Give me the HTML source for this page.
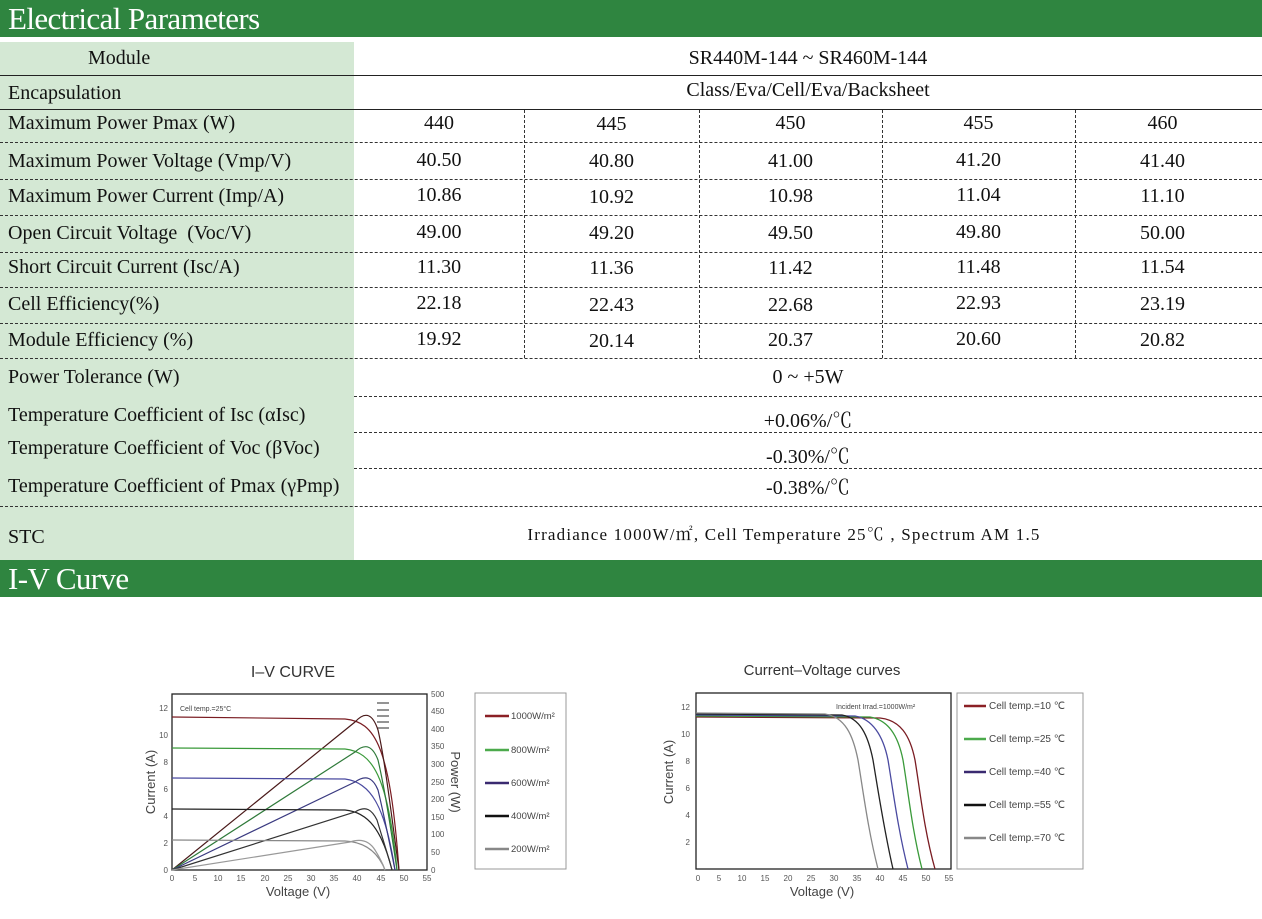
<!DOCTYPE html>
<html><head><meta charset="utf-8"><style>
body{margin:0;width:1262px;height:919px;background:#fff;position:relative;overflow:hidden;font-family:"Liberation Serif","Noto Serif CJK SC",serif;color:#111}
.bar{position:absolute;left:0;width:1262px;background:#2f8540;color:#fff;font-size:31px;line-height:37px;padding-left:8px;box-sizing:border-box;letter-spacing:-0.6px}
.lc{position:absolute;left:0;width:354px;background:#d4e8d4}
.t{position:absolute;font-size:20px;white-space:nowrap;margin-top:-1px}
.hl{position:absolute;height:0;border-top:1px dashed #333}
.hs{position:absolute;height:0;border-top:1px solid #222}
.vl{position:absolute;width:0;border-left:1px dashed #333}
.c{text-align:center}
svg text{font-family:"Liberation Sans",sans-serif}
</style></head><body>
<div class="bar" style="top:0">Electrical Parameters</div>
<div class="lc" style="top:42px;height:518px"></div>
<div class="bar" style="top:560px">I-V Curve</div>

<div class="hs" style="left:0;width:1262px;top:75px"></div>
<div class="hs" style="left:0;width:1262px;top:109px"></div>
<div class="hl" style="left:0;width:1262px;top:142px"></div>
<div class="hl" style="left:0;width:1262px;top:179px"></div>
<div class="hl" style="left:0;width:1262px;top:215px"></div>
<div class="hl" style="left:0;width:1262px;top:252px"></div>
<div class="hl" style="left:0;width:1262px;top:287px"></div>
<div class="hl" style="left:0;width:1262px;top:323px"></div>
<div class="hl" style="left:0;width:1262px;top:358px"></div>
<div class="hl" style="left:354px;width:908px;top:396px"></div>
<div class="hl" style="left:354px;width:908px;top:432px"></div>
<div class="hl" style="left:354px;width:908px;top:468px"></div>
<div class="hl" style="left:0;width:1262px;top:506px"></div>
<div class="vl" style="left:524px;top:110px;height:248px"></div>
<div class="vl" style="left:699px;top:110px;height:248px"></div>
<div class="vl" style="left:882px;top:110px;height:248px"></div>
<div class="vl" style="left:1075px;top:110px;height:248px"></div>

<div class="t" style="left:88px;top:48px">Module</div>
<div class="t c" style="left:354px;width:908px;top:48px">SR440M-144 ~ SR460M-144</div>
<div class="t" style="left:8px;top:83px">Encapsulation</div>
<div class="t c" style="left:354px;width:908px;top:80px">Class/Eva/Cell/Eva/Backsheet</div>

<div class="t" style="left:8px;top:113px">Maximum Power Pmax (W)</div>
<div class="t" style="left:8px;top:151px">Maximum Power Voltage (Vmp/V)</div>
<div class="t" style="left:8px;top:186px">Maximum Power Current (Imp/A)</div>
<div class="t" style="left:8px;top:223px">Open Circuit Voltage &nbsp;(Voc/V)</div>
<div class="t" style="left:8px;top:257px">Short Circuit Current (Isc/A)</div>
<div class="t" style="left:8px;top:294px">Cell Efficiency(%)</div>
<div class="t" style="left:8px;top:330px">Module Efficiency (%)</div>
<div class="t" style="left:8px;top:367px">Power Tolerance (W)</div>
<div class="t" style="left:8px;top:405px">Temperature Coefficient of Isc (αIsc)</div>
<div class="t" style="left:8px;top:438px">Temperature Coefficient of Voc (βVoc)</div>
<div class="t" style="left:8px;top:476px">Temperature Coefficient of Pmax (γPmp)</div>
<div class="t" style="left:8px;top:527px">STC</div>

<div class="t c" style="left:354px;width:170px;top:113px">440</div>
<div class="t c" style="left:524px;width:175px;top:114px">445</div>
<div class="t c" style="left:699px;width:183px;top:113px">450</div>
<div class="t c" style="left:882px;width:193px;top:113px">455</div>
<div class="t c" style="left:1075px;width:175px;top:113px">460</div>

<div class="t c" style="left:354px;width:170px;top:150px">40.50</div>
<div class="t c" style="left:524px;width:175px;top:151px">40.80</div>
<div class="t c" style="left:699px;width:183px;top:151px">41.00</div>
<div class="t c" style="left:882px;width:193px;top:150px">41.20</div>
<div class="t c" style="left:1075px;width:175px;top:151px">41.40</div>

<div class="t c" style="left:354px;width:170px;top:185px">10.86</div>
<div class="t c" style="left:524px;width:175px;top:187px">10.92</div>
<div class="t c" style="left:699px;width:183px;top:186px">10.98</div>
<div class="t c" style="left:882px;width:193px;top:185px">11.04</div>
<div class="t c" style="left:1075px;width:175px;top:186px">11.10</div>

<div class="t c" style="left:354px;width:170px;top:222px">49.00</div>
<div class="t c" style="left:524px;width:175px;top:223px">49.20</div>
<div class="t c" style="left:699px;width:183px;top:223px">49.50</div>
<div class="t c" style="left:882px;width:193px;top:222px">49.80</div>
<div class="t c" style="left:1075px;width:175px;top:223px">50.00</div>

<div class="t c" style="left:354px;width:170px;top:257px">11.30</div>
<div class="t c" style="left:524px;width:175px;top:258px">11.36</div>
<div class="t c" style="left:699px;width:183px;top:258px">11.42</div>
<div class="t c" style="left:882px;width:193px;top:257px">11.48</div>
<div class="t c" style="left:1075px;width:175px;top:257px">11.54</div>

<div class="t c" style="left:354px;width:170px;top:293px">22.18</div>
<div class="t c" style="left:524px;width:175px;top:295px">22.43</div>
<div class="t c" style="left:699px;width:183px;top:295px">22.68</div>
<div class="t c" style="left:882px;width:193px;top:293px">22.93</div>
<div class="t c" style="left:1075px;width:175px;top:294px">23.19</div>

<div class="t c" style="left:354px;width:170px;top:329px">19.92</div>
<div class="t c" style="left:524px;width:175px;top:331px">20.14</div>
<div class="t c" style="left:699px;width:183px;top:330px">20.37</div>
<div class="t c" style="left:882px;width:193px;top:329px">20.60</div>
<div class="t c" style="left:1075px;width:175px;top:330px">20.82</div>

<div class="t c" style="left:354px;width:908px;top:367px">0 ~ +5W</div>
<div class="t c" style="left:354px;width:908px;top:405px">+0.06%/℃</div>
<div class="t c" style="left:354px;width:908px;top:441px">-0.30%/℃</div>
<div class="t c" style="left:354px;width:908px;top:472px">-0.38%/℃</div>
<div class="t c" style="left:330px;width:908px;top:521px;font-size:17px;letter-spacing:1.2px">Irradiance 1000W/㎡, Cell Temperature 25℃ , Spectrum AM 1.5</div>

<svg style="position:absolute;left:0;top:0" width="1262" height="919">
<!-- left chart -->
<text x="293" y="677" font-size="16" fill="#333" text-anchor="middle">I–V CURVE</text>
<rect x="172" y="694" width="255" height="176" fill="none" stroke="#222" stroke-width="1.3"/>
<g font-size="8" fill="#555" text-anchor="end">
<text x="168" y="873">0</text><text x="168" y="846">2</text><text x="168" y="819">4</text><text x="168" y="792">6</text><text x="168" y="765">8</text><text x="168" y="738">10</text><text x="168" y="711">12</text>
</g>
<g font-size="8" fill="#555">
<text x="431" y="873">0</text><text x="431" y="855">50</text><text x="431" y="837">100</text><text x="431" y="820">150</text><text x="431" y="802">200</text><text x="431" y="785">250</text><text x="431" y="767">300</text><text x="431" y="749">350</text><text x="431" y="732">400</text><text x="431" y="714">450</text><text x="431" y="697">500</text>
</g>
<g font-size="8" fill="#555" text-anchor="middle">
<text x="172" y="881">0</text><text x="195" y="881">5</text><text x="218" y="881">10</text><text x="241" y="881">15</text><text x="265" y="881">20</text><text x="288" y="881">25</text><text x="311" y="881">30</text><text x="334" y="881">35</text><text x="357" y="881">40</text><text x="381" y="881">45</text><text x="404" y="881">50</text><text x="427" y="881">55</text>
</g>
<text x="298" y="896" font-size="13" fill="#444" text-anchor="middle">Voltage (V)</text>
<text transform="translate(155,782) rotate(-90)" font-size="13" fill="#444" text-anchor="middle">Current (A)</text>
<text transform="translate(451,782) rotate(90)" font-size="13" fill="#444" text-anchor="middle">Power (W)</text>
<text x="180" y="711" font-size="7" fill="#444">Cell temp.=25°C</text>
<g stroke-width="1.2" fill="none">
<path d="M377,703h12M377,710h12M377,716h12M377,722h12M377,728h12" stroke="#555"/>
<path d="M172,717 L345,719 C375,722 390,745 399,870" stroke="#7a1c22"/>
<path d="M172,870 L355,722 C366,710 373,715 378,730 C385,760 392,820 399,870" stroke="#4a1a1a"/>
<path d="M172,748 L345,749 C372,752 388,775 397,870" stroke="#3a9a3a"/>
<path d="M172,870 L355,752 C366,742 373,747 378,760 C385,790 391,830 397,870" stroke="#2f7a3a"/>
<path d="M172,778 L345,779 C370,782 385,805 395,870" stroke="#4a4aa0"/>
<path d="M172,870 L355,782 C366,774 373,778 378,790 C384,815 390,845 395,870" stroke="#3a3a80"/>
<path d="M172,809 L345,810 C368,812 382,830 392,870" stroke="#222"/>
<path d="M172,870 L355,812 C366,805 372,810 377,820 C383,840 388,855 392,870" stroke="#333"/>
<path d="M172,840 L345,841 C365,842 378,852 385,870" stroke="#888"/>
<path d="M172,870 L350,842 C362,838 370,842 375,850 C380,858 383,864 385,870" stroke="#999"/>
</g>
<rect x="475" y="693" width="91" height="176" fill="none" stroke="#999"/>
<g stroke-width="2.5"><path d="M485,716h24" stroke="#8b2025"/><path d="M485,750h24" stroke="#4caa4c"/><path d="M485,783h24" stroke="#3a2a70"/><path d="M485,816h24" stroke="#111"/><path d="M485,849h24" stroke="#888"/></g>
<g font-size="9.5" fill="#444"><text x="511" y="719">1000W/m²</text><text x="511" y="753">800W/m²</text><text x="511" y="786">600W/m²</text><text x="511" y="819">400W/m²</text><text x="511" y="852">200W/m²</text></g>

<!-- right chart -->
<text x="822" y="675" font-size="15" fill="#333" text-anchor="middle">Current–Voltage curves</text>
<rect x="696" y="693" width="255" height="176" fill="none" stroke="#222" stroke-width="1.3"/>
<g font-size="8" fill="#555" text-anchor="end">
<text x="690" y="845">2</text><text x="690" y="818">4</text><text x="690" y="791">6</text><text x="690" y="764">8</text><text x="690" y="737">10</text><text x="690" y="710">12</text>
</g>
<g font-size="8" fill="#555" text-anchor="middle">
<text x="698" y="881">0</text><text x="719" y="881">5</text><text x="742" y="881">10</text><text x="765" y="881">15</text><text x="788" y="881">20</text><text x="811" y="881">25</text><text x="834" y="881">30</text><text x="857" y="881">35</text><text x="880" y="881">40</text><text x="903" y="881">45</text><text x="926" y="881">50</text><text x="949" y="881">55</text>
</g>
<text x="822" y="896" font-size="13" fill="#444" text-anchor="middle">Voltage (V)</text>
<text transform="translate(673,772) rotate(-90)" font-size="13" fill="#444" text-anchor="middle">Current (A)</text>
<text x="836" y="709" font-size="7" fill="#444">Incident Irrad.=1000W/m²</text>
<g stroke-width="1.3" fill="none">
<path d="M696,717 L880,718 C900,720 910,735 915,760 C920,790 924,830 935,869" stroke="#7a1c22"/>
<path d="M696,716 L870,717 C888,720 898,735 903,760 C908,790 912,830 922,869" stroke="#3a9a3a"/>
<path d="M696,715 L855,716 C872,719 883,735 888,760 C893,790 898,830 908,869" stroke="#4a4aa0"/>
<path d="M696,714 L842,715 C860,718 868,735 873,760 C878,790 884,830 893,869" stroke="#222"/>
<path d="M696,713 L825,714 C845,717 853,735 858,760 C863,790 868,830 878,869" stroke="#888"/>
</g>
<rect x="957" y="693" width="126" height="176" fill="none" stroke="#999"/>
<g stroke-width="2.5"><path d="M964,706h22" stroke="#8b2025"/><path d="M964,739h22" stroke="#4caa4c"/><path d="M964,772h22" stroke="#3a2a70"/><path d="M964,805h22" stroke="#111"/><path d="M964,838h22" stroke="#888"/></g>
<g font-size="10" fill="#444"><text x="989" y="709">Cell temp.=10 ℃</text><text x="989" y="742">Cell temp.=25 ℃</text><text x="989" y="775">Cell temp.=40 ℃</text><text x="989" y="808">Cell temp.=55 ℃</text><text x="989" y="841">Cell temp.=70 ℃</text></g>
</svg>
</body></html>
